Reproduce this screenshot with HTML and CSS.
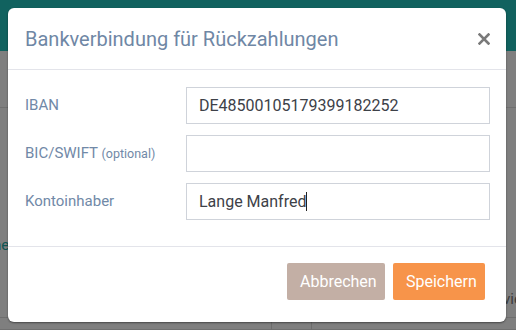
FILE: index.html
```html
<!DOCTYPE html>
<html lang="de">
<head>
<meta charset="utf-8">
<title>Bankverbindung</title>
<link rel="stylesheet" href="styles.css">
</head>
<body>
<div class="page">
  <div class="topbar"></div>
  <div class="row row-1"></div>
  <div class="spacer"></div>
  <div class="row row-2">
    <div class="cell cell-a"></div>
    <div class="cell cell-b"></div>
    <div class="cell cell-c"></div>
  </div>
  <span class="scrap scrap-left">ne</span>
  <span class="scrap scrap-right">vie</span>
</div>

<div class="modal">
  <div class="modal-header">
    <h2 class="modal-title">Bankverbindung für Rückzahlungen</h2>
    <button class="close" aria-label="Schließen">
      <svg width="12" height="12" viewBox="0 0 12 12"><path d="M1.5 1.5 L10.5 10.5 M10.5 1.5 L1.5 10.5" stroke="#7a7a7a" stroke-width="2.6" stroke-linecap="square"/></svg>
    </button>
  </div>
  <div class="modal-body">
    <div class="form-row">
      <label class="label">IBAN</label>
      <div class="field">DE48500105179399182252</div>
    </div>
    <div class="form-row">
      <label class="label">BIC/SWIFT <small>(optional)</small></label>
      <div class="field"></div>
    </div>
    <div class="form-row">
      <label class="label">Kontoinhaber</label>
      <div class="field">Lange Manfred<span class="caret"></span></div>
    </div>
  </div>
  <div class="modal-footer">
    <button class="btn btn-cancel">Abbrechen</button>
    <button class="btn btn-save">Speichern</button>
  </div>
</div>
</body>
</html>
```

FILE: styles.css
```css
* { box-sizing: border-box; }
html, body { margin: 0; padding: 0; }
body {
  width: 516px;
  height: 330px;
  overflow: hidden;
  font-family: Roboto, "Liberation Sans", sans-serif;
  background: #7f7f7f;
  position: relative;
}
.page { position: relative; width: 516px; height: 330px; }
.topbar { height: 51px; background: #11625f; }
.row { border-bottom: 1px solid #707070; }
.row-1 { height: 57px; }
.spacer { height: 210px; border-bottom: 1px solid #6e6e6e; }
.row-2 { display: flex; height: 12px; }
.cell { height: 12px; }
.cell-a { width: 272px; border-right: 1px solid #6e6e6e; }
.cell-b { width: 40px; border-right: 1px solid #6e6e6e; }
.scrap { position: absolute; font-size: 15px; }
.scrap-left { left: -7px; top: 236px; color: #0e5553; }
.scrap-right { left: 503px; top: 290px; color: #3c3c3c; }

.modal {
  position: absolute;
  left: 8px;
  top: 8px;
  width: 498px;
  height: 314px;
  background: #fff;
  border-radius: 6px;
  box-shadow: 0 1px 2px rgba(0,0,0,0.45);
  display: flex;
  flex-direction: column;
}
.modal-header {
  height: 62px;
  border-bottom: 1px solid #e3e4ea;
  display: flex;
  align-items: center;
  justify-content: space-between;
  padding: 0 16px 0 17px;
}
.modal-title {
  margin: 0;
  font-size: 20px;
  font-weight: 400;
  color: #6f87a5;
  letter-spacing: 0;
}
.close {
  border: 0;
  background: none;
  padding: 0;
  width: 12px;
  height: 12px;
  display: block;
}
.close svg { display: block; }
.modal-body {
  padding: 17px 16px 0 17px;
  display: flex;
  flex-direction: column;
  gap: 11px;
  height: 177px;
  border-bottom: 1px solid #e3e4ea;
}
.form-row {
  display: flex;
  align-items: center;
  height: 37px;
}
.label {
  width: 161px;
  font-size: 15px;
  color: #7189a7;
  margin-top: -2px;
}
.label small { font-size: 12.5px; }
.field {
  width: 304px;
  height: 37px;
  border: 1px solid #cfd3da;
  font-size: 16px;
  color: #3d4148;
  padding: 0 12px;
  display: flex;
  align-items: center;
}
.caret {
  display: inline-block;
  width: 1px;
  height: 19px;
  background: #222;
  margin-left: 0;
}
.modal-footer {
  flex: 1;
  display: flex;
  justify-content: flex-end;
  align-items: flex-start;
  gap: 8px;
  padding: 16px 21px 0 0;
}
.btn {
  border: 0;
  border-radius: 2px;
  height: 37px;
  font-family: Roboto, "Liberation Sans", sans-serif;
  font-size: 16px;
  color: #fff;
  padding: 0 13px;
}
.btn-cancel { background: #c3afa5; width: 98px; }
.btn-save { background: #f7944a; width: 92px; }
```
